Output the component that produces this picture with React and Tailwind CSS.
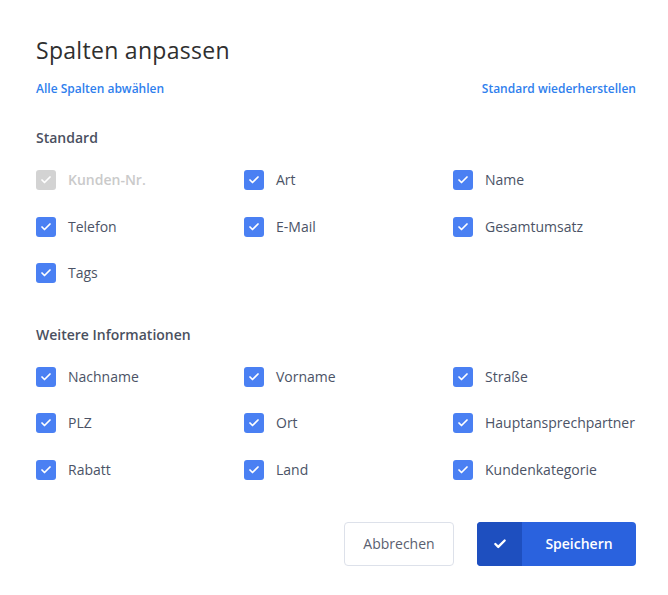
import { Check } from 'lucide-react'

const sections = [
  {
    title: 'Standard',
    items: [
      { label: 'Kunden-Nr.', disabled: true },
      { label: 'Art' }, { label: 'Name' },
      { label: 'Telefon' }, { label: 'E-Mail' }, { label: 'Gesamtumsatz' },
      { label: 'Tags' },
    ],
  },
  {
    title: 'Weitere Informationen',
    items: [
      { label: 'Nachname' }, { label: 'Vorname' }, { label: 'Straße' },
      { label: 'PLZ' }, { label: 'Ort' }, { label: 'Hauptansprechpartner' },
      { label: 'Rabatt' }, { label: 'Land' }, { label: 'Kundenkategorie' },
    ],
  },
]

function Box({ label, disabled }) {
  return (
    <label className="flex items-center gap-3 h-[46.5px]">
      <span className={'w-5 h-5 rounded-[3px] flex items-center justify-center ' + (disabled ? 'bg-[#d3d3d3]' : 'bg-[#4a80f3]')}>
        <Check className="w-3 h-3 text-white" strokeWidth={3.5} />
      </span>
      <span className={'text-sm ' + (disabled ? 'text-[#cacaca] font-semibold' : 'text-[#4b5366]')}>{label}</span>
    </label>
  )
}

export default function App() {
  return (
    <div className="w-[668px] h-[595px] bg-white pl-9 pr-8 pt-[34px]" style={{ fontFamily: '"Open Sans", sans-serif' }}>
      <h2 className="text-[23px] leading-8 text-[#2f2f2f] tracking-[0.3px]">Spalten anpassen</h2>

      <div className="flex justify-between mt-[14px] text-[12px] font-semibold text-[#2f80ed]">
        <button>Alle Spalten abwählen</button>
        <button>Standard wiederherstellen</button>
      </div>

      {sections.map((s, i) => (
        <div key={s.title} className={i === 0 ? 'mt-[30px]' : 'mt-[28px]'}>
          <h3 className="text-sm font-semibold text-[#4a5060] leading-5">{s.title}</h3>
          <div className="grid grid-cols-[208px_209px_1fr] mt-[9px]">
            {s.items.map(it => <Box key={it.label} {...it} />)}
          </div>
        </div>
      ))}

      <div className="flex justify-end gap-[23px] mt-[29px]">
        <button className="h-11 w-[110px] rounded-[4px] border border-[#dde1ea] text-sm text-[#5a6070]">Abbrechen</button>
        <button className="h-11 w-[159px] rounded-[4px] bg-[#2a62de] flex overflow-hidden text-sm font-semibold text-white">
          <span className="w-[45px] h-full bg-[#1e4fbf] flex items-center justify-center">
            <Check className="w-3.5 h-3.5" strokeWidth={4} />
          </span>
          <span className="flex-1 flex items-center justify-center">Speichern</span>
        </button>
      </div>
    </div>
  )
}
